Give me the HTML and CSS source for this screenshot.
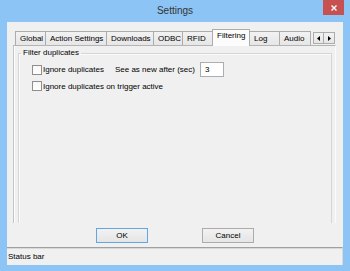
FILE: index.html
```html
<!DOCTYPE html>
<html lang="en">
<head>
    <meta charset="UTF-8">
    <meta name="viewport" content="width=device-width, initial-scale=1.0">
    <link rel="stylesheet" href="styles.css">
</head>
<body>
    <div class="window">
        <div class="titlebar">
            <span></span>
            <span class="title">Settings</span>
            <button class="close" type="button">
                <svg width="6" height="6" viewBox="0 0 6 6"><path d="M0.5 0.5 L5.5 5.5 M5.5 0.5 L0.5 5.5" stroke="#fff" stroke-width="1.4" fill="none"/></svg>
            </button>
        </div>
        <div class="client">
            <div class="tabarea">
                <div class="tabstrip">
                    <div class="tabs">
                        <div class="tab">Global</div>
                        <div class="tab">Action Settings</div>
                        <div class="tab">Downloads</div>
                        <div class="tab">ODBC</div>
                        <div class="tab">RFID</div>
                        <div class="tab active">Filtering</div>
                        <div class="tab">Log</div>
                        <div class="tab last">Audio</div>
                    </div>
                    <div class="scroller">
                        <span class="arrow"><svg width="3" height="5" viewBox="0 0 3 5"><path d="M3 0 L0 2.5 L3 5 Z" fill="#000"/></svg></span>
                        <span class="arrow"><svg width="3" height="5" viewBox="0 0 3 5"><path d="M0 0 L3 2.5 L0 5 Z" fill="#000"/></svg></span>
                    </div>
                </div>
                <div class="panel">
                    <fieldset class="group">
                        <legend>Filter duplicates</legend>
                        <div class="row first">
                            <label class="check"><span class="box"></span>Ignore duplicates</label>
                            <span class="field-label">See as new after (sec)</span>
                            <span class="textbox">3</span>
                        </div>
                        <div class="row">
                            <label class="check"><span class="box"></span>Ignore duplicates on trigger active</label>
                        </div>
                    </fieldset>
                </div>
            </div>
            <div class="buttons">
                <button class="btn default" type="button">OK</button>
                <button class="btn" type="button">Cancel</button>
            </div>
            <div class="statusbar">Status bar</div>
        </div>
    </div>
</body>
</html>
```

FILE: styles.css
```css
body {
    margin: 0;
    padding: 0;
    font-family: "Liberation Sans", Arial, sans-serif;
    font-size: 8px;
    color: #000;
}

.window {
    width: 350px;
    height: 271px;
    background-color: #8cc5f5;
    display: flex;
    flex-direction: column;
}

.titlebar {
    height: 22px;
    display: grid;
    grid-template-columns: 1fr auto 1fr;
}
.title {
    font-size: 10px;
    line-height: 22px;
    color: #333;
}
.close {
    justify-self: end;
    width: 21px;
    height: 15px;
    margin-right: 6px;
    padding: 0;
    border: none;
    background-color: #c75050;
    display: flex;
    align-items: center;
    justify-content: center;
}

.client {
    flex: 1;
    margin: 0 7px 6px 7px;
    background-color: #f0f0f0;
    display: flex;
    flex-direction: column;
}

.tabarea {
    padding: 7px 7px 0 6px;
}

/* tab headers */
.tabstrip {
    display: flex;
    align-items: flex-end;
    height: 16px;
    padding-left: 2px;
}
.tabs {
    display: grid;
    grid-template-columns: 30px 61px 47px 29px 30px 38px 29px 32px;
    align-items: end;
}
.tab {
    height: 14px;
    line-height: 13px;
    padding-left: 4px;
    box-sizing: border-box;
    border-top: 1px solid #acacac;
    border-left: 1px solid #acacac;
    background: linear-gradient(#f2f2f2, #e6e6e6);
    white-space: nowrap;
}
.tab.last {
    border-right: 1px solid #acacac;
}
.tab.active {
    height: 17px;
    margin-bottom: -1px;
    line-height: 12px;
    border-right: 1px solid #acacac;
    background: #fcfcfc;
    position: relative;
    z-index: 1;
}
.tab.active + .tab {
    border-left: none;
}
.scroller {
    display: flex;
    margin-left: 2px;
    margin-bottom: 1px;
}
.arrow {
    width: 11px;
    height: 12px;
    box-sizing: border-box;
    border: 1px solid #acacac;
    background: linear-gradient(#f2f2f2, #e6e6e6);
    display: flex;
    align-items: center;
    justify-content: center;
}
.arrow + .arrow {
    border-left: none;
}

/* tab page */
.panel {
    height: 178px;
    box-sizing: border-box;
    border-top: 1px solid #b4b4b4;
    border-left: 1px solid #c4c4c4;
    border-right: 1px solid #fafafa;
    box-shadow: inset 1px 0 #fdfdfd;
    padding: 2px 3px 0 4px;
    display: flex;
    flex-direction: column;
}

.group {
    flex: 1;
    margin: 0;
    padding: 0 0 0 2px;
    border: 1px solid #d6d6d6;
    border-bottom: none;
    box-shadow: inset 1px 1px #fbfbfb;
    min-width: 0;
}
.group legend {
    padding: 0 2px;
    line-height: 10px;
}

.row {
    display: flex;
    align-items: center;
    padding-left: 11px;
    margin-top: 4px;
    min-height: 10px;
}
.row.first {
    height: 15px;
}
.check {
    display: flex;
    align-items: center;
    white-space: nowrap;
}
.box {
    width: 10px;
    height: 10px;
    box-sizing: border-box;
    border: 1px solid #8f8f8f;
    background: linear-gradient(#f6f6f6, #fff);
    margin-right: 1px;
}
.field-label {
    margin-left: 11px;
    white-space: nowrap;
}
.textbox {
    width: 24px;
    height: 15px;
    box-sizing: border-box;
    margin-left: 5px;
    border: 1px solid #abadb3;
    background-color: #fff;
    padding-left: 4px;
    line-height: 13px;
}

/* dialog buttons */
.buttons {
    display: flex;
    justify-content: center;
    gap: 54px;
    margin-top: 5px;
}
.btn {
    width: 52px;
    height: 15px;
    padding: 0;
    border: 1px solid #acacac;
    border-radius: 0;
    background: linear-gradient(#f2f2f2, #e5e5e5);
    font-family: "Liberation Sans", Arial, sans-serif;
    font-size: 8px;
    color: #000;
}
.btn.default {
    border-color: #62a6e3;
}

.statusbar {
    margin-top: 4px;
    height: 18px;
    box-sizing: border-box;
    border-top: 1px solid #a0a0a0;
    box-shadow: inset 0 1px #d9d9d9;
    border-right: 1px solid #dadada;
    padding-left: 1px;
    line-height: 17px;
}
```
